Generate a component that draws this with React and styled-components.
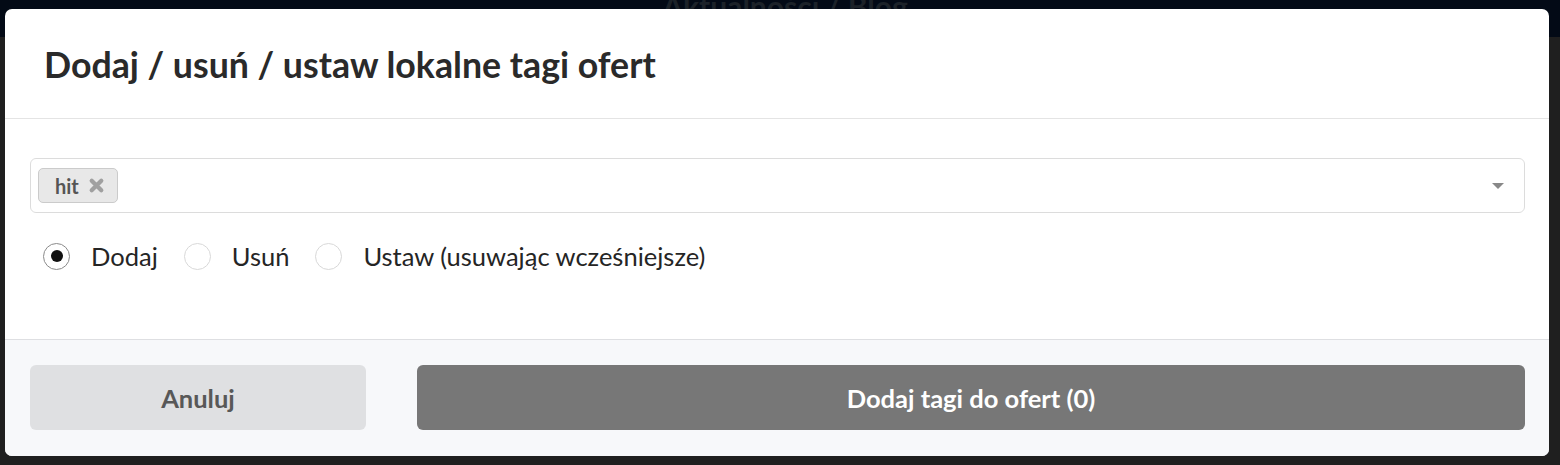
import React, {useState} from "react";
import styled, {createGlobalStyle} from "styled-components";

const GlobalStyle = createGlobalStyle`
  html, body {
    margin: 0;
    padding: 0;
    background: #1f1f1f;
    font-family: Lato, "Open Sans", sans-serif;
  }
`

const options = [
    {id: "add", label: "Dodaj"},
    {id: "remove", label: "Usuń"},
    {id: "set", label: "Ustaw (usuwając wcześniejsze)"},
]

const App = () => {
    const [mode, setMode] = useState("add")
    const [tags, setTags] = useState(["hit"])
    const count = 0

    return (
        <Page>
            <GlobalStyle/>
            <TopBar>
                <TopTitle>Aktualności / Blog</TopTitle>
            </TopBar>

            <Modal>
                <Header>
                    <Title>Dodaj / usuń / ustaw lokalne tagi ofert</Title>
                </Header>
                <Body>
                    <Select>
                        <Tags>
                            {tags.map(tag => (
                                <Tag key={tag}>
                                    {tag}
                                    <TagRemove onClick={() => setTags(tags.filter(t => t !== tag))}>
                                        <svg width="17" height="17" viewBox="0 0 16 16">
                                            <path d="M3.5 3.5 L12.5 12.5 M12.5 3.5 L3.5 12.5" stroke="#a0a0a0" strokeWidth="4" strokeLinecap="round"/>
                                        </svg>
                                    </TagRemove>
                                </Tag>
                            ))}
                        </Tags>
                        <Caret/>
                    </Select>
                    <RadioRow>
                        {options.map(opt => (
                            <RadioLabel key={opt.id} onClick={() => setMode(opt.id)}>
                                <RadioCircle checked={mode === opt.id}/>
                                {opt.label}
                            </RadioLabel>
                        ))}
                    </RadioRow>
                </Body>
                <Footer>
                    <CancelButton>Anuluj</CancelButton>
                    <SubmitButton>{`Dodaj tagi do ofert (${count})`}</SubmitButton>
                </Footer>
            </Modal>
        </Page>
    )
}

const Page = styled.div`
  position: relative;
  width: 1560px;
  height: 465px;
  overflow: hidden;
  background: #1f1f1f;
`
const TopBar = styled.div`
  height: 37px;
  background: #030a16;
  display: flex;
  justify-content: center;
`
const TopTitle = styled.div`
  margin-left: 10px;
  margin-top: -12px;
  font-size: 30px;
  line-height: 36px;
  font-weight: 700;
  color: #1c2229;
`
const Modal = styled.div`
  position: absolute;
  left: 5px;
  top: 9px;
  width: 1544px;
  height: 447px;
  background: #fff;
  border-radius: 7px;
  overflow: hidden;
  display: flex;
  flex-direction: column;
`
const Header = styled.div`
  height: 110px;
  box-sizing: border-box;
  padding: 0 39px;
  display: flex;
  align-items: center;
  border-bottom: 1px solid #e4e4e4;
`
const Title = styled.h2`
  margin: 0;
  margin-top: 2px;
  font-size: 35.7px;
  font-weight: 700;
  color: #2a2a2a;
`
const Body = styled.div`
  flex: 1;
  padding: 39px 24px 0 25px;
`
const Select = styled.div`
  height: 55px;
  box-sizing: border-box;
  border: 1px solid #dcdcdc;
  border-radius: 6px;
  display: flex;
  align-items: center;
  justify-content: space-between;
  padding: 0 20px 0 7px;
`
const Tags = styled.div`
  display: flex;
  gap: 6px;
`
const Tag = styled.div`
  height: 35px;
  box-sizing: border-box;
  padding: 0 12px 0 16px;
  display: flex;
  align-items: center;
  gap: 9px;
  background: #e8e8e8;
  border: 1px solid #cbcbcb;
  border-radius: 5px;
  font-size: 20px;
  font-weight: 700;
  color: #555;
`
const TagRemove = styled.span`
  display: flex;
  cursor: pointer;
`
const Caret = styled.span`
  width: 0;
  height: 0;
  border-left: 6px solid transparent;
  border-right: 6px solid transparent;
  border-top: 6px solid #888;
`
const RadioRow = styled.div`
  display: flex;
  align-items: center;
  gap: 26px;
  margin-top: 28px;
  padding-left: 13px;
`
const RadioLabel = styled.label`
  display: flex;
  align-items: center;
  gap: 21px;
  font-size: 25.5px;
  color: #252525;
  cursor: pointer;
`
const RadioCircle = styled.span`
  width: 27px;
  height: 27px;
  box-sizing: border-box;
  border-radius: 50%;
  border: 1px solid ${p => p.checked ? "#8a8a8a" : "#d8d8d8"};
  display: flex;
  align-items: center;
  justify-content: center;

  &::after {
    content: "";
    width: 12px;
    height: 12px;
    border-radius: 50%;
    background: #111;
    display: ${p => p.checked ? "block" : "none"};
  }
`
const Footer = styled.div`
  height: 117px;
  box-sizing: border-box;
  border-top: 1px solid #dedfe2;
  background: #f7f8fa;
  padding: 25px 24px 26px 25px;
  display: flex;
  gap: 51px;
`
const Button = styled.button`
  height: 65px;
  border: none;
  border-radius: 6px;
  font-family: Lato, "Open Sans", sans-serif;
  font-size: 25.5px;
  font-weight: 700;
  cursor: pointer;
`
const CancelButton = styled(Button)`
  width: 336px;
  background: #dfe0e2;
  color: #585858;
`
const SubmitButton = styled(Button)`
  flex: 1;
  background: #777;
  color: #fff;
`

export default App
